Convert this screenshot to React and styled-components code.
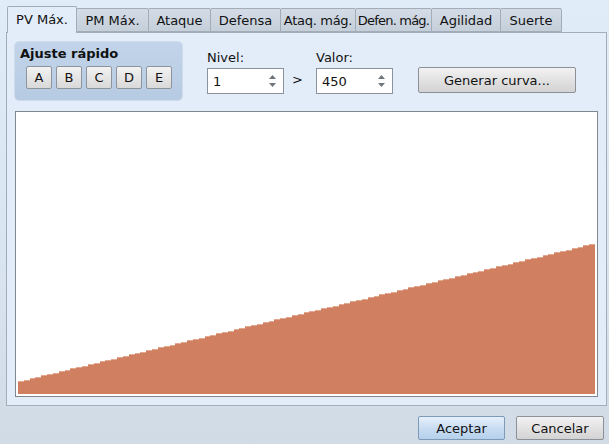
import React from "react";
import styled, { createGlobalStyle } from "styled-components";

const Global = createGlobalStyle`
  html, body { margin: 0; padding: 0; }
  body { font-family: "DejaVu Sans", "Noto Sans", sans-serif; font-size: 13px; color: #111; }
  #root { width: 609px; height: 444px; overflow: hidden; }
`;

const Window = styled.div`
  width: 609px;
  height: 444px;
  box-sizing: border-box;
  background: linear-gradient(#e1ecf9 0%, #dae5f2 55%, #d0dbe6 100%);
  padding: 6px 3px 0 6px;
  display: flex;
  flex-direction: column;
`;

const TabBar = styled.div`
  display: flex;
  align-items: flex-end;
  height: 26px;
  padding-left: 1px;
  position: relative;
  z-index: 2;
`;

const Tab = styled.div`
  box-sizing: border-box;
  width: ${p => p.$w}px;
  height: ${p => (p.$active ? 27 : 24)}px;
  margin-bottom: ${p => (p.$active ? -1 : 0)}px;
  margin-left: ${p => (p.$first ? 0 : -1)}px;
  border: 1px solid #a3adb8;
  border-bottom: ${p => (p.$active ? "none" : "1px solid #a3adb8")};
  border-radius: 2px 2px 0 0;
  background: ${p => (p.$active ? "#e3edf9" : "linear-gradient(#d3dce6, #c5cfda)")};
  display: flex;
  align-items: center;
  justify-content: center;
  white-space: nowrap;
  overflow: hidden;
  letter-spacing: ${p => p.$ls || 0}px;
  padding-bottom: ${p => (p.$active ? 2 : 0)}px;
`;

const Pane = styled.div`
  box-sizing: border-box;
  width: 601px;
  height: 374px;
  border: 1px solid #a3adb8;
  background: #e3edf9;
  padding: 8px 8px 0 7px;
  display: flex;
  flex-direction: column;
  gap: 10px;
`;

const TopRow = styled.div`
  display: flex;
  align-items: flex-start;
`;

const Group = styled.div`
  box-sizing: border-box;
  width: 169px;
  height: 60px;
  border: 1px solid #cfdcec;
  border-radius: 5px;
  background: linear-gradient(#c2d4e9, #b6cbe3);
  padding: 4px 0 0 5px;
  display: flex;
  flex-direction: column;
  gap: 4px;
`;

const GroupTitle = styled.div`
  font-weight: bold;
  font-size: 13px;
  line-height: 16px;
`;

const LetterRow = styled.div`
  display: flex;
  gap: 4px;
  padding-left: 6px;
`;

const SmallButton = styled.div`
  box-sizing: border-box;
  width: 26px;
  height: 23px;
  border: 1px solid #8e949b;
  border-radius: 2px;
  background: linear-gradient(#f2f2f2, #d9d9d9);
  display: flex;
  align-items: center;
  justify-content: center;
`;

const Field = styled.div`
  display: flex;
  flex-direction: column;
  gap: 2px;
  margin-top: 9px;
  margin-left: ${p => p.$ml || 0}px;
`;

const Label = styled.div`
  line-height: 16px;
`;

const Spin = styled.div`
  box-sizing: border-box;
  width: 77px;
  height: 26px;
  background: #fff;
  border: 1px solid #8a929b;
  display: flex;
  align-items: center;
  justify-content: space-between;
  padding: 0 6px 0 5px;
`;

const Arrows = styled.svg`
  width: 9px;
  height: 14px;
`;

const Gt = styled.div`
  width: 32px;
  margin-top: 31px;
  padding-left: 8px;
  box-sizing: border-box;
`;

const Button = styled.div`
  box-sizing: border-box;
  width: ${p => p.$w}px;
  height: ${p => p.$h || 24}px;
  border: 1px solid ${p => (p.$primary ? "#7e9ab5" : "#8c9198")};
  border-radius: 2px;
  background: ${p =>
    p.$primary
      ? "linear-gradient(#e6f0fb, #c9ddf2 50%, #b5d0ec)"
      : "linear-gradient(#f2f2f2, #e2e2e2 50%, #d3d3d3)"};
  display: flex;
  align-items: center;
  justify-content: center;
  margin-top: ${p => p.$mt || 0}px;
  margin-left: ${p => p.$ml || 0}px;
`;

const Chart = styled.div`
  box-sizing: border-box;
  width: 583px;
  height: 286px;
  margin-left: 1px;
  border: 1px solid #80878f;
  background: #fff;
  padding: 2px;
  display: flex;
`;

const Footer = styled.div`
  display: flex;
  justify-content: flex-end;
  gap: 11px;
  padding: 10px 2px 0 0;
`;

const tabs = [
  { t: "PV Máx.", w: 70 },
  { t: "PM Máx.", w: 73 },
  { t: "Ataque", w: 63 },
  { t: "Defensa", w: 71 },
  { t: "Ataq. mág.", w: 76, ls: -0.3 },
  { t: "Defen. mág.", w: 77, ls: -0.8 },
  { t: "Agilidad", w: 70 },
  { t: "Suerte", w: 62 },
];

function SpinArrows() {
  return (
    <Arrows viewBox="0 0 9 14">
      <path d="M4.5 1 L8 5 L1 5 Z" fill="#6f757c" />
      <path d="M4.5 13 L8 9 L1 9 Z" fill="#6f757c" />
    </Arrows>
  );
}

function CurveChart() {
  const W = 577;
  const H = 280;
  const n = 99;
  const bw = W / n;
  const bars = [];
  for (let i = 0; i < n; i++) {
    const h = Math.round(13 + (137 * i) / (n - 1));
    const x = Math.round(i * bw);
    const x2 = Math.round((i + 1) * bw);
    bars.push(
      <g key={i}>
        <rect x={x} y={H - h} width={x2 - x} height={h} fill="#d08060" />
        <rect x={x} y={H - h} width={x2 - x} height={1} fill="#e2a990" />
      </g>
    );
  }
  return (
    <svg width={W} height={H} viewBox={`0 0 ${W} ${H}`} shapeRendering="crispEdges">
      {bars}
    </svg>
  );
}

export default function App() {
  return (
    <>
      <Global />
      <Window>
        <TabBar>
          {tabs.map((tb, i) => (
            <Tab key={tb.t} $w={tb.w} $active={i === 0} $first={i === 0} $ls={tb.ls}>
              {tb.t}
            </Tab>
          ))}
        </TabBar>
        <Pane>
          <TopRow>
            <Group>
              <GroupTitle>Ajuste rápido</GroupTitle>
              <LetterRow>
                {["A", "B", "C", "D", "E"].map(l => (
                  <SmallButton key={l}>{l}</SmallButton>
                ))}
              </LetterRow>
            </Group>
            <Field $ml={24}>
              <Label>Nivel:</Label>
              <Spin>
                <span>1</span>
                <SpinArrows />
              </Spin>
            </Field>
            <Gt>&gt;</Gt>
            <Field>
              <Label>Valor:</Label>
              <Spin>
                <span>450</span>
                <SpinArrows />
              </Spin>
            </Field>
            <Button $w={158} $h={26} $mt={26} $ml={25}>
              Generar curva...
            </Button>
          </TopRow>
          <Chart>
            <CurveChart />
          </Chart>
        </Pane>
        <Footer>
          <Button $w={87} $primary>
            Aceptar
          </Button>
          <Button $w={88}>Cancelar</Button>
        </Footer>
      </Window>
    </>
  );
}
